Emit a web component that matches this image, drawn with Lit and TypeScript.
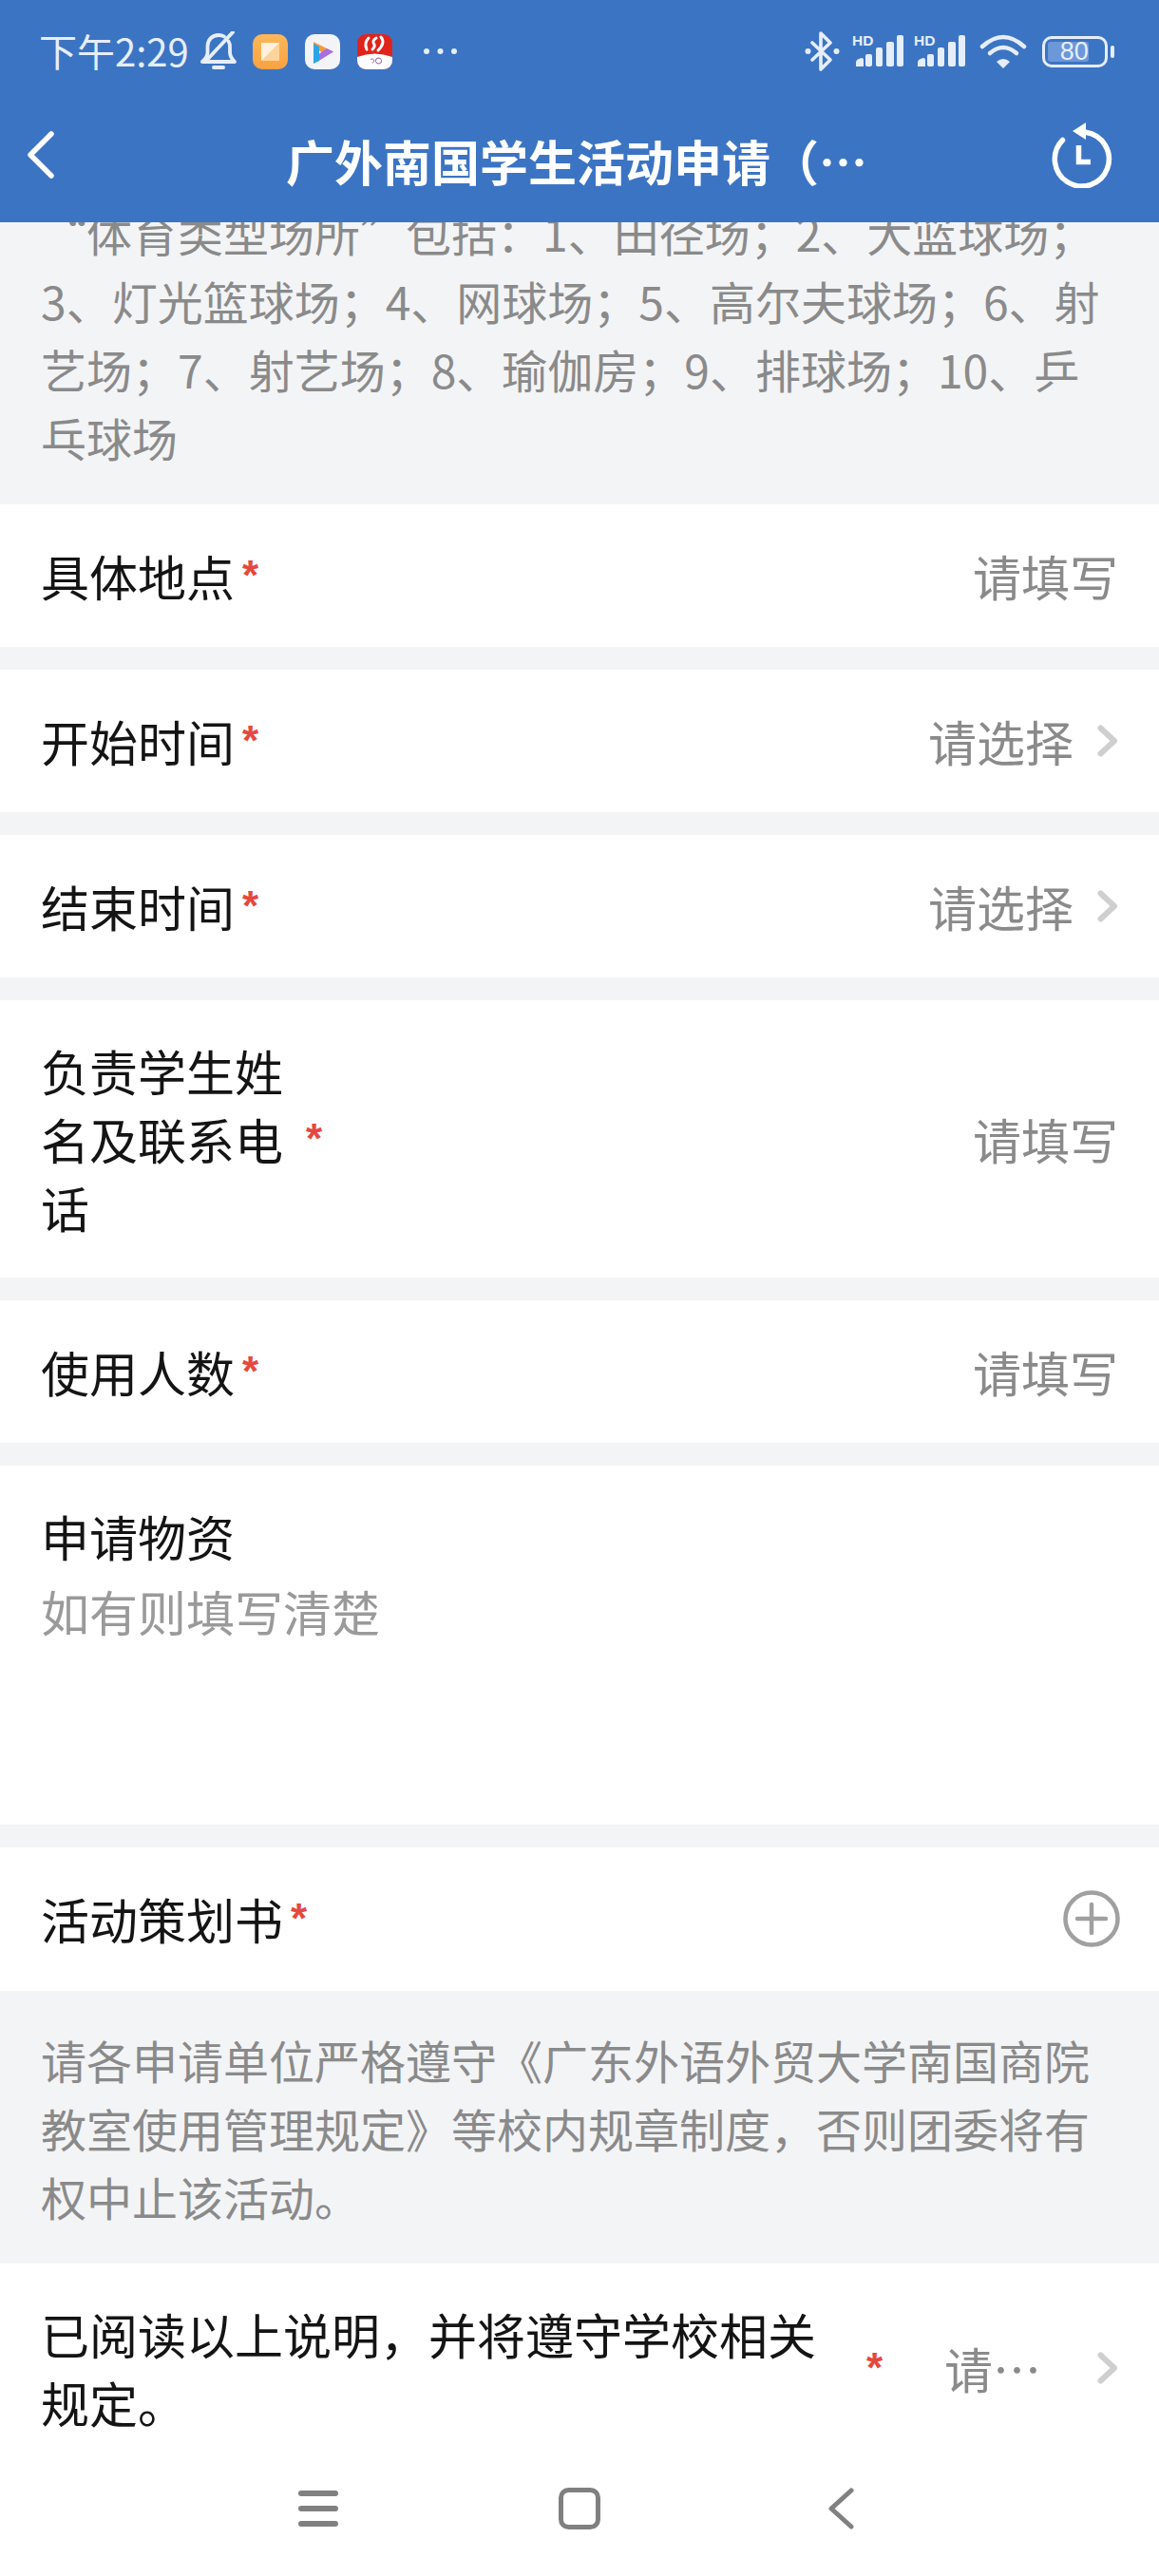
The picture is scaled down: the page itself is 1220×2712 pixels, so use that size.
import { LitElement, html, css, svg } from 'lit';
import { customElement } from 'lit/decorators.js';

const signal = svg`
  <text x="0" y="11" font-family="Liberation Sans" font-weight="700" font-size="15.500" fill="#e6eefa">HD</text>
  <path d="M4 29q0-3 3-4l3-1q2 0 2 2v7H4z" fill="#e6eefa"/>
  <rect x="14" y="20" width="7" height="13" rx="2" fill="#e6eefa"/>
  <rect x="25" y="13" width="7" height="20" rx="2" fill="#e6eefa"/>
  <rect x="36" y="7" width="8" height="26" rx="2" fill="#e6eefa"/>
  <rect x="47" y="0" width="7" height="33" rx="2" fill="#e6eefa"/>`;

@customElement('status-bar')
class StatusBar extends LitElement {
    static styles = css`
        :host {
            display: flex;
            align-items: center;
            justify-content: space-between;
            height: 108px;
            padding: 0 47px 0 41px;
            color: #e6eefa;
        }
        .side { display: flex; align-items: center; }
        .time { font-size: 40px; line-height: 48px; width: 160px; white-space: nowrap; margin-top: -2px; }
        svg { display: block; flex: none; }
        .bell { margin-left: 10px; }
        .app { margin-left: 17px; }
        .app + .app { margin-left: 18px; }
        .more { margin-left: 32px; }
        .gap-13 { margin-left: 13px; }
        .gap-11 { margin-left: 11px; }
        .gap-15 { margin-left: 15px; }
        .battery {
            margin-left: 16px;
            box-sizing: border-box;
            width: 69px;
            height: 33px;
            border: 3.5px solid #e6eefa;
            border-radius: 10px;
            padding: 3px;
            display: flex;
        }
        .level {
            width: 75%;
            background: #6c97d8;
            border-radius: 3px;
            font-family: 'Liberation Sans', sans-serif;
            font-size: 27px;
            line-height: 20px;
            color: #e6eefa;
            text-align: right;
        }
        .cap { width: 4px; height: 13px; background: #e6eefa; border-radius: 2px; margin-left: 3px; }
    `;

    render() {
        return html`
            <div class="side">
                <span class="time">下午2:29</span>
                <svg class="bell" width="38" height="42" viewBox="0 0 38 42" fill="none" stroke="#e6eefa" stroke-width="3.8" stroke-linecap="round" stroke-linejoin="round">
                    <path d="M2 32h34c-3-3-5-6-5-10v-6c0-2-.5-4-1.500-5.500M25 5.500C23.500 4.500 21 4 19 4 12 4 7.500 9 7.500 16v6c0 4-2 7-5.500 10"/>
                    <path d="M34 1 6 31"/>
                    <path d="M14 38h10" stroke-width="4"/>
                </svg>
                <svg class="app" width="37" height="37" viewBox="0 0 37 37">
                    <defs>
                        <linearGradient id="og" x1="0" y1="0" x2="0" y2="1">
                            <stop offset="0" stop-color="#fdb75a"/><stop offset="1" stop-color="#f9a240"/>
                        </linearGradient>
                    </defs>
                    <rect width="37" height="37" rx="10" fill="url(#og)"/>
                    <path d="M9 9h19v8L17 28H9z" fill="#fff1dc"/>
                    <path d="M28 9v19H9z" fill="#fdd39c"/>
                </svg>
                <svg class="app" width="37" height="37" viewBox="0 0 37 37">
                    <rect width="37" height="37" rx="10" fill="#f3f4f8"/>
                    <path d="M9 8 30 18.500 23 22 15 17.500 9 15z" fill="#f59a3c"/>
                    <path d="M30 18.500 13 29 13 22 23 15z" fill="#a86ee4"/>
                    <path d="M9 10l6 3v15l-6 3z" fill="#2aa6e6"/>
                </svg>
                <svg class="app" width="37" height="37" viewBox="0 0 37 37">
                    <rect width="37" height="37" rx="9" fill="#e0231b"/>
                    <path d="M0 24Q18.500 17 37 24v4a9 9 0 0 1-9 9H9a9 9 0 0 1-9-9z" fill="#fff"/>
                    <g fill="none" stroke="#fff" stroke-width="3" stroke-linecap="round">
                        <path d="M12 4Q7 9 10 16"/>
                        <path d="M20 4Q15 7 18 11 19 13 16 16"/>
                        <path d="M25 3Q30 9 22 17"/>
                    </g>
                    <path d="M14 27a2 2 0 1 1 2 3M22 25a3 3 0 1 0 1 6 3 3 0 1 0-1-6" fill="none" stroke="#8d5aa8" stroke-width="1"/>
                </svg>
                <svg class="more" width="37" height="8" viewBox="0 0 37 8" fill="#e6eefa">
                    <circle cx="4" cy="4" r="3"/><circle cx="18.500" cy="4" r="3"/><circle cx="33" cy="4" r="3"/>
                </svg>
            </div>
            <div class="side">
                <svg width="37" height="42" viewBox="0 0 37 42" fill="none" stroke="#e6eefa" stroke-width="3.600" stroke-linejoin="round" stroke-linecap="round">
                    <path d="M8 12 27 30 17 40V2l10 10L8 30"/>
                    <circle cx="3.500" cy="21" r="3" fill="#e6eefa" stroke="none"/>
                    <circle cx="33.500" cy="21" r="3" fill="#e6eefa" stroke="none"/>
                </svg>
                <svg class="gap-13" width="54" height="34" viewBox="0 0 54 34">${signal}</svg>
                <svg class="gap-11" width="54" height="34" viewBox="0 0 54 34">${signal}</svg>
                <svg class="gap-15" width="50" height="36" viewBox="0 0 50 36" fill="none" stroke="#e6eefa" stroke-width="4.500" stroke-linecap="round">
                    <path d="M3 13Q25-7 47 13"/>
                    <path d="M11 20Q25 8 39 20"/>
                    <path d="M25 36l-7-7Q25 23 32 29z" fill="#e6eefa" stroke="none"/>
                </svg>
                <div class="battery"><div class="level">80</div></div>
                <div class="cap"></div>
            </div>
        `;
    }
}

@customElement('form-row')
class FormRow extends LitElement {
    static properties = {
        label: { type: String },
        value: { type: String },
        required: { type: Boolean },
        arrow: { type: Boolean },
    };
    label = '';
    value = '';
    required = false;
    arrow = false;

    static styles = css`
        :host {
            display: flex;
            align-items: center;
            padding: 39px 43px 39px 43px;
            background: #fff;
            line-height: 72px;
            flex: none;
        }
        :host([wrap]) { padding: 38px 43px; }
        :host([wrap]) .label { width: 262px; flex: none; }
        :host([long]) { padding: 38px 43px 36px; }
        :host([long]) .label { width: 830px; flex: none; }
        :host([long]) .star { margin-left: 39px; }
        :host([long]) .value { width: 136px; }
        :host([wrap]) .star { margin-left: 17px; }
        .label { color: #141414; }
        .star { color: #e5483f; font-size: 44px; font-weight: 700; margin-left: 8px; flex: none; font-family: 'Liberation Sans', sans-serif; line-height: 40px; }
        .value { margin-left: auto; color: #8a8a8a; white-space: nowrap; }
        svg { display: block; flex: none; margin-left: 25px; }
    `;

    render() {
        return html`
            <span class="label">${this.label}</span>
            ${this.required ? html`<span class="star">*</span>` : ''}
            <span class="value">${this.value}</span>
            ${this.arrow
                ? html`<svg width="22" height="34" viewBox="0 0 22 34" fill="none" stroke="#cfcfcf" stroke-width="6" stroke-linecap="round" stroke-linejoin="round"><path d="M3.500 3.500 18 17 3.500 30.500"/></svg>`
                : ''}
        `;
    }
}

@customElement('app-root')
class AppRoot extends LitElement {
    static styles = css`
        :host {
            display: flex;
            flex-direction: column;
            height: 2712px;
            background: #fff;
            font-family: 'Noto Sans CJK SC', 'Noto Sans', sans-serif;
            font-size: 51px;
            overflow: hidden;
        }
        header { flex: none; height: 234px; background: #3c74c4; color: #fff; }
        .bar { display: flex; align-items: center; justify-content: space-between; height: 126px; padding: 0 48px 0 28px; }
        .bar svg { display: block; flex: none; margin-bottom: 16px; }
        .title { font-weight: 700; line-height: 72px; white-space: nowrap; margin-top: -4px; margin-left: 50px; }
        main { flex: 1; min-height: 0; overflow: hidden; background: #f3f4f6; display: flex; flex-direction: column; gap: 24px; }
        .tip { background: #f3f4f6; color: #8a8a8a; padding: 0 43px; font-size: 48px; line-height: 72px; flex: none; white-space: nowrap; }
        .intro { margin-top: -26px; margin-bottom: -24px; padding-bottom: 35px; }
        .notice { padding-top: 36px; padding-bottom: 35px; margin: -24px 0; }
        .area { background: #fff; height: 378px; box-sizing: border-box; padding: 38px 43px; line-height: 72px; flex: none; }
        .area .label { color: #141414; }
        .area .hint { color: #9a9a9a; margin-top: 7px; }
        .upload { background: #fff; display: flex; align-items: center; justify-content: space-between; padding: 39px 41px 40px 43px; line-height: 72px; flex: none; }
        .upload .label { color: #141414; }
        .upload .star { color: #e5483f; font-size: 44px; font-weight: 700; margin-left: 8px; font-family: 'Liberation Sans', sans-serif; }
        .upload .name { display: flex; align-items: center; }
        .upload svg { display: block; }
        nav { flex: none; height: 130px; background: #fff; display: flex; justify-content: center; align-items: center; padding-bottom: 12px; box-sizing: border-box; }
        nav div { width: 275px; display: flex; justify-content: center; }
        nav svg { display: block; }
    `;

    render() {
        return html`
            <header>
                <status-bar></status-bar>
                <div class="bar">
                    <svg width="30" height="50" viewBox="0 0 30 50" fill="none" stroke="#fff" stroke-width="5.500" stroke-linecap="round" stroke-linejoin="round"><path d="M26 3 4 25l22 22"/></svg>
                    <span class="title">广外南国学生活动申请（…</span>
                    <svg width="66" height="70" viewBox="0 0 66 70" fill="none" stroke="#fff" stroke-width="5.500" stroke-linecap="round">
                        <path d="M12.500 19.500A28.500 28.500 0 1 0 37 11.300"/>
                        <path d="M37 1v18L23 10z" fill="#fff" stroke="none"/>
                        <path d="M29.500 25v17.500H42" stroke-linecap="butt"/>
                    </svg>
                </div>
            </header>
            <main>
                <div class="tip intro">“体育类型场所”包括：1、田径场；2、大篮球场；<br>3、灯光篮球场；4、网球场；5、高尔夫球场；6、射<br>艺场；7、射艺场；8、瑜伽房；9、排球场；10、乒<br>乓球场</div>
                <form-row label="具体地点" value="请填写" required></form-row>
                <form-row label="开始时间" value="请选择" required arrow></form-row>
                <form-row label="结束时间" value="请选择" required arrow></form-row>
                <form-row wrap label="负责学生姓名及联系电话" value="请填写" required></form-row>
                <form-row label="使用人数" value="请填写" required></form-row>
                <div class="area">
                    <div class="label">申请物资</div>
                    <div class="hint">如有则填写清楚</div>
                </div>
                <div class="upload">
                    <div class="name"><span class="label">活动策划书</span><span class="star">*</span></div>
                    <svg width="60" height="60" viewBox="0 0 60 60" fill="none" stroke="#a0a0a0" stroke-width="4.500" stroke-linecap="round"><circle cx="30" cy="30" r="27.500"/><path d="M15 30h30M30 15v30"/></svg>
                </div>
                <div class="tip notice">请各申请单位严格遵守《广东外语外贸大学南国商院<br>教室使用管理规定》等校内规章制度，否则团委将有<br>权中止该活动。</div>
                <form-row long label="已阅读以上说明，并将遵守学校相关规定。" value="请…" required arrow></form-row>
            </main>
            <nav>
                <div><svg width="42" height="38" viewBox="0 0 42 38" fill="#808080"><rect width="42" height="6" rx="3"/><rect y="16" width="42" height="6" rx="3"/><rect y="32" width="42" height="6" rx="3"/></svg></div>
                <div><svg width="44" height="44" viewBox="0 0 44 44" fill="none" stroke="#808080" stroke-width="5"><rect x="2.500" y="2.500" width="39" height="39" rx="8"/></svg></div>
                <div><svg width="28" height="44" viewBox="0 0 28 44" fill="none" stroke="#808080" stroke-width="5" stroke-linecap="round" stroke-linejoin="round"><path d="M25 3 4 22l21 19"/></svg></div>
            </nav>
        `;
    }
}
